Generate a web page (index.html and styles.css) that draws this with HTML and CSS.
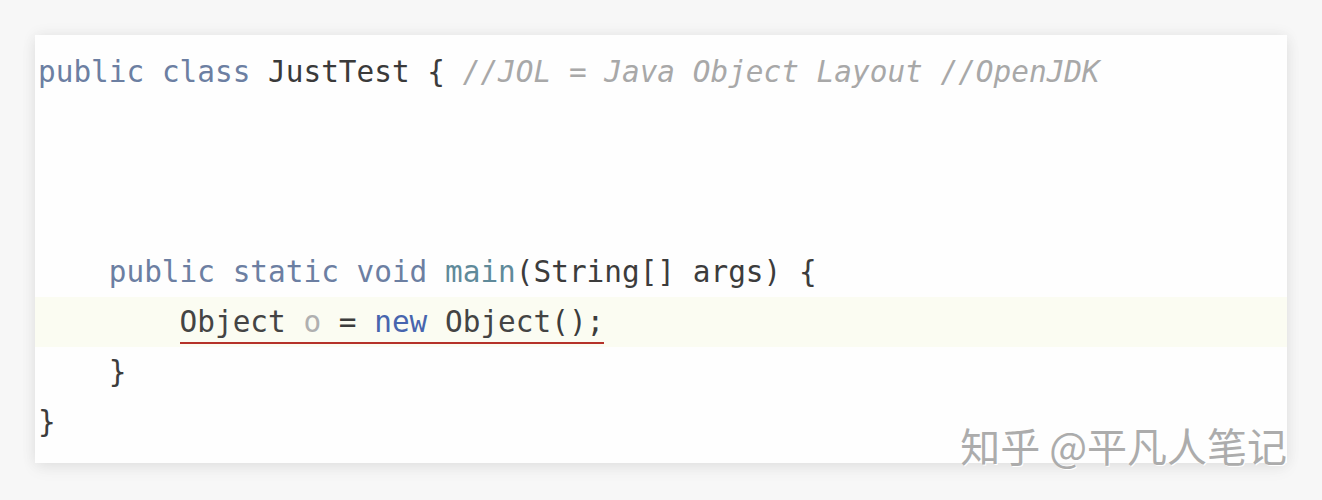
FILE: index.html
```html
<!DOCTYPE html>
<html lang="zh">
<head>
<meta charset="utf-8">
<link rel="stylesheet" href="styles.css">
</head>
<body>
<div class="stage">
  <div class="card">
    <div class="line"><span class="kw">public</span> <span class="kw">class</span> <span class="cls">JustTest</span> { <span class="cm">//JOL = Java Object Layout //OpenJDK</span></div>
    <div class="line"></div>
    <div class="line"></div>
    <div class="line"></div>
    <div class="line">    <span class="kw">public</span> <span class="kw">static</span> <span class="kw">void</span> <span class="fn">main</span>(String[] args) {</div>
    <div class="line current">        <span class="err"><span class="typ">Object</span> <span class="unused">o</span> = <span class="nw">new</span> <span class="typ">Object</span>();</span></div>
    <div class="line">    }</div>
    <div class="line">}</div>
    <div class="watermark">知乎 @平凡人笔记</div>
  </div>
</div>
</body>
</html>
```

FILE: styles.css
```css
html, body {
  margin: 0;
  padding: 0;
}
body {
  background: #f7f7f7;
  width: 1322px;
  height: 500px;
  overflow: hidden;
}
.stage {
  padding: 35px 35px 0 35px;
}
.card {
  position: relative;
  width: 1252px;
  height: 428px;
  box-sizing: border-box;
  background: #fefefe;
  box-shadow: 0 0 14px rgba(0, 0, 0, 0.07), 0 6px 16px rgba(0, 0, 0, 0.05);
  padding: 12px 0 0 3px;
  font-family: "DejaVu Sans Mono", monospace;
  font-size: 29.4px;
  color: #3c3c3c;
}
.line {
  height: 50px;
  line-height: 50px;
  white-space: pre;
}
.current {
  background: #fbfcf2;
  margin-left: -3px;
  padding-left: 3px;
}
.kw { color: #6c7fa2; }
.cls { color: #3a3a3a; }
.cm { color: #a8a8a8; font-style: italic; }
.fn { color: #5f8a9a; }
.typ { color: #444444; }
.unused { color: #b0b0b0; }
.nw { color: #4765ae; }
.err {
  border-bottom: 2px solid #b5322a;
  padding-bottom: 3px;
}
.watermark {
  position: absolute;
  right: 0;
  bottom: -5px;
  font-family: "Noto Sans CJK SC", sans-serif;
  font-size: 40px;
  line-height: 46px;
  color: #acacac;
  text-shadow: 1px 1px 0 #ffffff, -1px -1px 0 rgba(255,255,255,0.8);
}
```
